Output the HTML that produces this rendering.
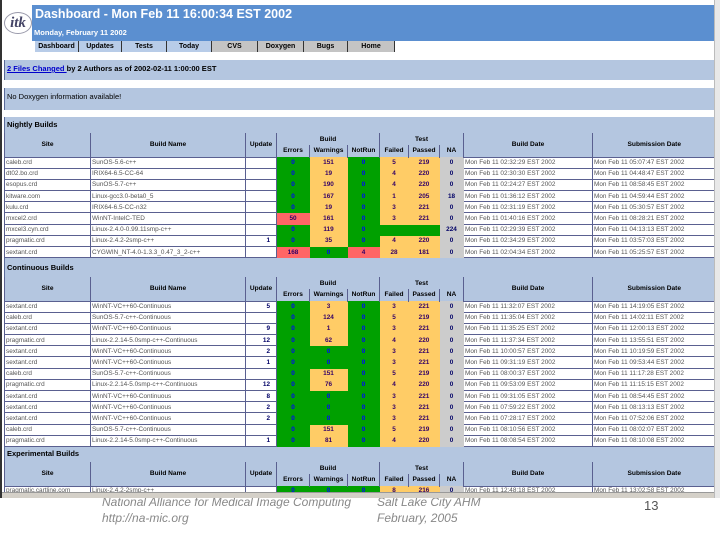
<!DOCTYPE html>
<html><head><meta charset="utf-8"><style>
*{margin:0;padding:0;box-sizing:border-box}
body{width:720px;height:540px;background:#fff;position:relative;overflow:hidden;font-family:"Liberation Sans",Arial,sans-serif;color:#000}
.a{position:absolute}
#shot{position:absolute;left:0;top:0;width:714px;height:498px;overflow:hidden;background:#fff;border-left:2px solid #333;z-index:2}
.band{position:absolute;left:2px;width:711px;background:#b4c6e0;border-left:1px solid #5a6a9a;font-size:7.5px;font-weight:bold;padding-left:2px}
table{position:absolute;left:2px;border-collapse:collapse;table-layout:fixed;width:711px;font-size:6.4px}
td{border:1px solid #5a6090;white-space:nowrap;overflow:hidden;line-height:7px;padding:0 1px}
th{background:#b4c6e0;font-weight:bold;font-size:6.6px;border-left:1px solid #5a6090;padding:0}
td.g{background:#00a000;color:#00f;text-align:center;font-weight:bold;border-color:#00a000}
td.o{background:#ffcc66;color:#306;text-align:center;font-weight:bold;border-color:#ffcc66}
td.r{background:#ff6666;color:#306;text-align:center;font-weight:bold;border-color:#ff6666}
td.n{background:#ccc;color:#006;text-align:center;font-weight:bold;border-color:#ccc}
td.u{text-align:right;color:#006;font-weight:bold;padding-right:6px}
td.t{color:#555}
.nav span{display:inline-block;height:11px;font-size:7px;font-weight:bold;text-align:center;line-height:11px;border-right:1px solid #333}
.ft{position:absolute;font-style:italic;color:#888;font-size:12px}
</style></head><body>
<div id="shot">
<div class="a" style="left:2px;top:12px;width:28px;height:22px;border:1px solid #99a;border-radius:50%;font:italic bold 15px 'Liberation Serif',serif;color:#446;text-align:center;line-height:20px">itk</div>
<div class="a" style="left:30px;top:5px;width:683px;height:36px;background:#5b8fd0;color:#fff">
<div style="font-size:12.5px;font-weight:bold;padding:2px 0 0 3px">Dashboard - Mon Feb 11 16:00:34 EST 2002</div>
<div style="font-size:7.5px;font-weight:bold;padding:7px 0 0 2px">Monday, February 11 2002</div></div>
<div class="a nav" style="left:33px;top:41px;width:365px;height:12px;font-size:0">
<span style="width:44px;background:#b8cce8">Dashboard</span><span style="width:43px;background:#b8cce8">Updates</span><span style="width:45px;background:#b8cce8">Tests</span><span style="width:45px;background:#b8cce8">Today</span><span style="width:46px;background:#c4c4c4">CVS</span><span style="width:46px;background:#c4c4c4">Doxygen</span><span style="width:44px;background:#c4c4c4">Bugs</span><span style="width:47px;background:#c4c4c4">Home</span></div>
<div class="band" style="top:60px;height:20px;padding-top:4px"><u style="color:#00c">2 Files Changed </u>by 2 Authors as of 2002-02-11 1:00:00 EST</div>
<div class="band" style="top:88px;height:22px;padding-top:4px;font-weight:normal">No Doxygen information available!</div>
<div class="band" style="top:117px;height:16px;padding-top:3px">Nightly Builds</div>
<div class="band" style="top:258px;height:19px;padding-top:5px">Continuous Builds</div>
<div class="band" style="top:446px;height:16px;padding-top:3px">Experimental Builds</div>
<div id="tables"></div>
<div class="a" style="left:0;top:492px;width:714px;height:6px;background:#d4d0c8;border-top:1px solid #999"></div>
</div>
<div class="a" style="left:714px;top:0;width:6px;height:498px;background:#e8e8e8;border-left:1px solid #bbb"></div>
<div class="ft" style="left:102px;top:495px">National Alliance for Medical Image Computing</div>
<div class="ft" style="left:102px;top:511px">http://na-mic.org</div>
<div class="ft" style="left:377px;top:495px">Salt Lake City AHM</div>
<div class="ft" style="left:377px;top:511px">February, 2005</div>
<div class="ft" style="left:644px;top:498px;font-style:normal;font-size:13px;color:#555">13</div>
<script>
var W=[86,155,31,33,38,32,29,31,24,129,123];
function hdr(){var c='<colgroup>'+W.map(function(w){return '<col style="width:'+w+'px">'}).join('')+'</colgroup>';
return c+'<tr style="height:12px"><th rowspan=2>Site</th><th rowspan=2>Build Name</th><th rowspan=2>Update</th><th colspan=3>Build</th><th colspan=3>Test</th><th rowspan=2>Build Date</th><th rowspan=2>Submission Date</th></tr><tr style="height:12px"><th>Errors</th><th>Warnings</th><th>NotRun</th><th>Failed</th><th>Passed</th><th>NA</th></tr>';}
function row(r,h){var s='<tr style="height:'+h+'px;background:#fff"><td class=t>'+r[0]+'</td><td class=t>'+r[1]+'</td><td class=u>'+r[2]+'</td>';
for(var i=3;i<9;i++){var v=r[i].split(':');s+='<td class='+v[1]+'>'+v[0]+'</td>';}
return s+'<td class=t>'+r[9]+'</td><td class=t>'+r[10]+'</td></tr>';}
var N=[
['caleb.crd','SunOS-5.6-c++','','0:g','151:o','0:g','5:o','219:o','0:n','Mon Feb 11 02:32:29 EST 2002','Mon Feb 11 05:07:47 EST 2002'],
['dt02.bo.crd','IRIX64-6.5-CC-64','','0:g','19:o','0:g','4:o','220:o','0:n','Mon Feb 11 02:30:30 EST 2002','Mon Feb 11 04:48:47 EST 2002'],
['esopus.crd','SunOS-5.7-c++','','0:g','190:o','0:g','4:o','220:o','0:n','Mon Feb 11 02:24:27 EST 2002','Mon Feb 11 08:58:45 EST 2002'],
['kitware.com','Linux-gcc3.0-beta0_5','','0:g','167:o','0:g','1:o','205:o','18:n','Mon Feb 11 01:36:12 EST 2002','Mon Feb 11 04:59:44 EST 2002'],
['kulu.crd','IRIX64-6.5-CC-n32','','0:g','19:o','0:g','3:o','221:o','0:n','Mon Feb 11 02:31:19 EST 2002','Mon Feb 11 05:30:57 EST 2002'],
['mxcel2.crd','WinNT-IntelC-TED','','50:r','161:o','0:g','3:o','221:o','0:n','Mon Feb 11 01:40:16 EST 2002','Mon Feb 11 08:28:21 EST 2002'],
['mxcel3.cyn.crd','Linux-2.4.0-0.99.11smp-c++','','0:g','119:o','0:g',':g',':g','224:n','Mon Feb 11 02:29:39 EST 2002','Mon Feb 11 04:13:13 EST 2002'],
['pragmatic.crd','Linux-2.4.2-2smp-c++','1','0:g','35:o','0:g','4:o','220:o','0:n','Mon Feb 11 02:34:29 EST 2002','Mon Feb 11 03:57:03 EST 2002'],
['sextant.crd','CYGWIN_NT-4.0-1.3.3_0.47_3_2-c++','','168:r','0:g','4:r','28:o','181:o','0:n','Mon Feb 11 02:04:34 EST 2002','Mon Feb 11 05:25:57 EST 2002']];
var S='sextant.crd',V='WinNT-VC++60-Continuous',C='caleb.crd',SU='SunOS-5.7-c++-Continuous',P='pragmatic.crd',L='Linux-2.2.14-5.0smp-c++-Continuous';
var bd=['11:32:07','11:35:04','11:35:25','11:37:34','10:00:57','09:31:19','08:00:37','09:53:09','09:31:05','07:59:22','07:28:17','08:10:56','08:08:54'];
var sd=['14:19:05','14:02:11','12:00:13','13:55:51','10:19:59','09:53:44','11:17:28','11:15:15','08:54:45','08:13:13','07:52:06','08:02:07','08:10:08'];
var CR=[[S,V,'5','0:g','3:o','0:g','3:o','221:o','0:n'],[C,SU,'','0:g','124:o','0:g','5:o','219:o','0:n'],[S,V,'9','0:g','1:o','0:g','3:o','221:o','0:n'],[P,L,'12','0:g','62:o','0:g','4:o','220:o','0:n'],[S,V,'2','0:g','0:g','0:g','3:o','221:o','0:n'],[S,V,'1','0:g','0:g','0:g','3:o','221:o','0:n'],[C,SU,'','0:g','151:o','0:g','5:o','219:o','0:n'],[P,L,'12','0:g','76:o','0:g','4:o','220:o','0:n'],[S,V,'8','0:g','0:g','0:g','3:o','221:o','0:n'],[S,V,'2','0:g','0:g','0:g','3:o','221:o','0:n'],[S,V,'2','0:g','0:g','0:g','3:o','221:o','0:n'],[C,SU,'','0:g','151:o','0:g','5:o','219:o','0:n'],[P,L,'1','0:g','81:o','0:g','4:o','220:o','0:n']];
var h='<table style="top:133px">'+hdr()+N.map(function(r){return row(r,11.2)}).join('')+'</table>';
h+='<table style="top:277px">'+hdr()+CR.map(function(r,i){return row(r.concat(['Mon Feb 11 '+bd[i]+' EST 2002','Mon Feb 11 '+sd[i]+' EST 2002']),11.2)}).join('')+'</table>';
h+='<table style="top:462px">'+hdr()+row(['pragmatic.cartline.com','Linux-2.4.2-2smp-c++','','0:g','0:g','0:g','8:o','216:o','0:n','Mon Feb 11 12:48:18 EST 2002','Mon Feb 11 13:02:58 EST 2002'],9)+'</table>';
document.getElementById('tables').innerHTML=h;
</script>
</body></html>
